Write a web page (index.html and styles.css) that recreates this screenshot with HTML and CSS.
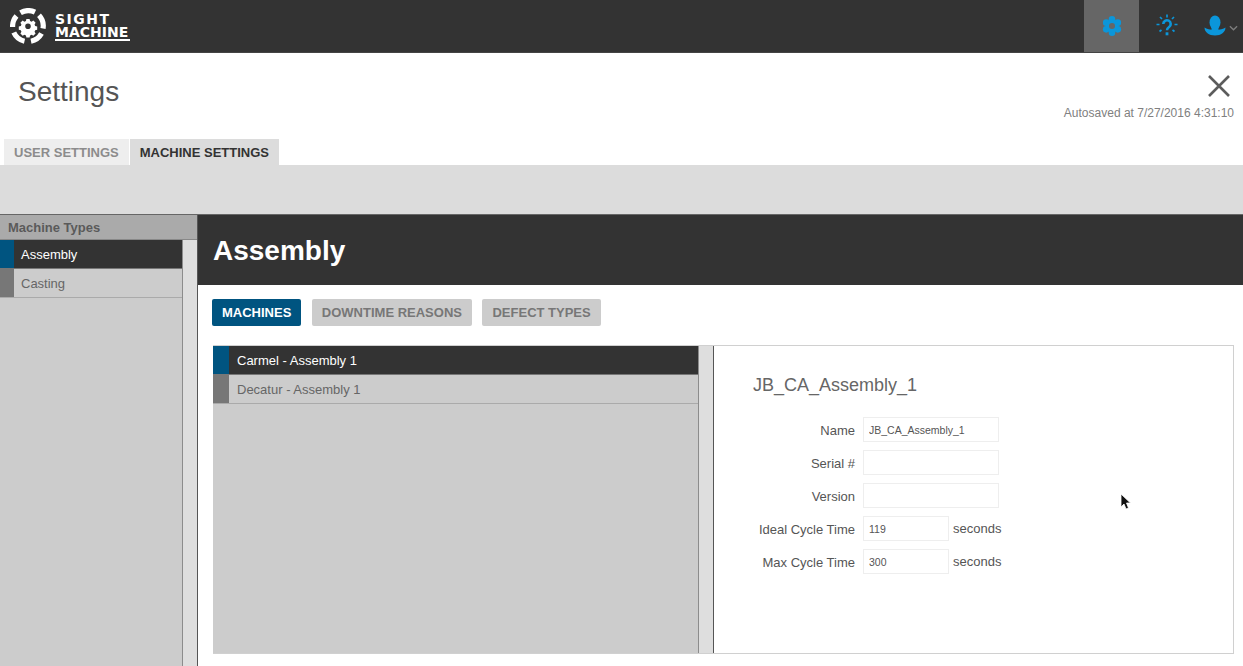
FILE: index.html
```html
<!DOCTYPE html>
<html lang="en">
<head>
  <meta charset="UTF-8" />
  <title>Settings</title>
  <link rel="stylesheet" href="styles.css">
</head>
<body>
  <header class="topbar">
    <a class="brand">
      <svg class="brand-mark" viewBox="0 0 36 36" width="36" height="36">
        <g fill="none" stroke="#fff" stroke-width="5.200">
          <path d="M10.500 4.800A15.500 15.500 0 0 1 25 4.200"/>
          <path d="M29 7.200A15.500 15.500 0 0 1 33 20.500"/>
          <path d="M31.500 25.500A15.500 15.500 0 0 1 21 33.200"/>
          <path d="M14.500 33.200A15.500 15.500 0 0 1 3.800 24.500"/>
          <path d="M2.600 19A15.500 15.500 0 0 1 6.500 8"/>
        </g>
        <path fill="#fff" fill-rule="evenodd" d="M16 9.500h4l.6 2.500 1.900.8 2.200-1.300 2.800 2.800-1.300 2.200.8 1.900 2.500.6v4l-2.500.6-.8 1.900 1.300 2.200-2.800 2.800-2.200-1.300-1.900.8-.6 2.500h-4l-.6-2.500-1.900-.8-2.200 1.300-2.800-2.800 1.300-2.200-.8-1.900-2.500-.6v-4l2.500-.6.8-1.900-1.300-2.200 2.800-2.800 2.200 1.300 1.900-.8zM18 15a3.500 3.500 0 1 0 0 7 3.500 3.500 0 0 0 0-7z" transform="translate(3.600 3.400) scale(.8)"/>
      </svg>
      <span class="brand-name"><span class="brand-top">SIGHT</span><span class="brand-line">MACHINE</span></span>
    </a>
    <nav class="top-icons">
      <a class="top-icon active">
        <svg viewBox="0 0 22 22" width="22" height="22">
          <g fill="#0b96da">
            <circle cx="11" cy="4.300" r="3.300"/>
            <circle cx="11" cy="17.700" r="3.300"/>
            <circle cx="5.200" cy="7.650" r="3.300"/>
            <circle cx="16.800" cy="7.650" r="3.300"/>
            <circle cx="5.200" cy="14.350" r="3.300"/>
            <circle cx="16.800" cy="14.350" r="3.300"/>
            <circle cx="11" cy="11" r="6.500"/>
          </g>
          <circle cx="11" cy="11" r="3" fill="#666"/>
        </svg>
      </a>
      <a class="top-icon">
        <svg viewBox="0 0 22 24" width="22" height="24">
          <g fill="none" stroke="#0b96da">
            <path stroke-width="2.600" d="M7.300 10a3.700 3.700 0 1 1 5.800 3c-1.300.9-2.100 1.500-2.100 3.300"/>
            <path stroke-width="1.700" d="M11 .5v3M4 3l2 2M18 3l-2 2M.5 10.500h3M18.500 10.500h3M3.500 17.500l2-1.500M18.500 17.500l-2-1.500"/>
          </g>
          <rect x="9.600" y="18.300" width="2.800" height="3" fill="#0b96da"/>
        </svg>
      </a>
      <a class="top-icon user">
        <svg viewBox="0 0 22 22" width="22" height="22">
          <ellipse cx="11" cy="7.500" rx="5.500" ry="7" fill="#0b96da"/>
          <path fill="#0b96da" d="M.5 12.500C2.500 14 6 15 11 15s8.500-1 10.500-2.500C21.500 17 17 20.500 11 20.500S.5 17 .5 12.500z"/>
          <path fill="#0b96da" d="M7.500 11h7v4.500h-7z"/>
        </svg>
        <svg class="caret" viewBox="0 0 10 6" width="9" height="6">
          <path d="M1 1l4 4 4-4" fill="none" stroke="#7d7d7d" stroke-width="1.500"/>
        </svg>
      </a>
    </nav>
  </header>

  <section class="page-head">
    <h1>Settings</h1>
    <div class="save-box">
      <svg class="close" viewBox="0 0 24 24" width="24" height="24">
        <path d="M2 2l20 20M22 2L2 22" stroke="#5c5c5c" stroke-width="2.600" fill="none"/>
      </svg>
      <div class="autosaved">Autosaved at 7/27/2016 4:31:10</div>
    </div>
  </section>

  <div class="tabs">
    <a class="tab">USER SETTINGS</a>
    <a class="tab selected">MACHINE SETTINGS</a>
  </div>
  <div class="band"></div>

  <main class="layout">
    <aside class="sidebar">
      <h4>Machine Types</h4>
      <div class="side-body">
        <ul class="list">
          <li class="item on"><i></i><span>Assembly</span></li>
          <li class="item"><i></i><span>Casting</span></li>
        </ul>
        <div class="scroll"></div>
      </div>
    </aside>

    <section class="content">
      <h2>Assembly</h2>
      <div class="pills">
        <a class="pill on">MACHINES</a>
        <a class="pill">DOWNTIME REASONS</a>
        <a class="pill">DEFECT TYPES</a>
      </div>
      <div class="panel">
        <ul class="list machines">
          <li class="item on"><i></i><span>Carmel - Assembly 1</span></li>
          <li class="item"><i></i><span>Decatur - Assembly 1</span></li>
        </ul>
        <div class="scroll"></div>
        <form class="detail">
          <h3>JB_CA_Assembly_1</h3>
          <div class="field"><label>Name</label><input type="text" value="JB_CA_Assembly_1" /></div>
          <div class="field"><label>Serial #</label><input type="text" /></div>
          <div class="field"><label>Version</label><input type="text" /></div>
          <div class="field"><label>Ideal Cycle Time</label><input class="short" type="text" value="119" /><span class="unit">seconds</span></div>
          <div class="field"><label>Max Cycle Time</label><input class="short" type="text" value="300" /><span class="unit">seconds</span></div>
        </form>
      </div>
    </section>
  </main>

  <svg class="cursor" viewBox="0 0 12 18" width="12" height="18">
    <path d="M1 1v13l3-3 2 5 2.500-1-2-5h4z" fill="#111" stroke="#fff" stroke-width=".8"/>
  </svg>
</body>
</html>
```

FILE: styles.css
```css
* {
  box-sizing: border-box;
}
html, body {
  height: 666px;
  overflow: hidden;
}
body {
  margin: 0;
  font-family: "Liberation Sans", Arial, sans-serif;
  background: #fff;
  color: #555;
  position: relative;
}
ul {
  list-style: none;
  margin: 0;
  padding: 0;
}

/* top bar */
.topbar {
  height: 53px;
  background: #333;
  display: flex;
  justify-content: space-between;
  align-items: stretch;
  border-bottom: 1px solid #444;
}
.brand {
  display: flex;
  align-items: center;
  padding-left: 10px;
  gap: 9px;
}
.brand-name {
  display: flex;
  flex-direction: column;
  color: #fff;
  font-family: "DejaVu Sans", sans-serif;
  font-weight: bold;
  font-size: 14px;
  line-height: 13px;
  width: 75px;
  margin-top: 1px;
}
.brand-top {
  letter-spacing: 1.500px;
}
.brand-line {
  border-bottom: 2px solid #fff;
  padding-bottom: 1px;
  line-height: 12px;
}
.top-icons {
  display: flex;
}
.top-icon {
  width: 55px;
  display: flex;
  align-items: center;
  justify-content: center;
}
.top-icon.active {
  background: #666;
}
.top-icon.user {
  width: 49px;
  justify-content: flex-start;
  padding-left: 10px;
  gap: 3px;
}
.caret {
  margin-top: 3px;
}

/* page head */
.page-head {
  height: 86px;
  display: flex;
  justify-content: space-between;
  padding: 0 9px 0 18px;
}
.page-head h1 {
  margin: 21px 0 0;
  font-weight: normal;
  font-size: 28px;
  line-height: 36px;
  color: #555;
}
.save-box {
  display: flex;
  flex-direction: column;
  align-items: flex-end;
  padding-top: 21px;
}
.close {
  margin-right: 3px;
}
.autosaved {
  margin-top: 8px;
  font-size: 12px;
  line-height: 14px;
  color: #808080;
}

/* tabs */
.tabs {
  display: flex;
  height: 26px;
  padding-left: 4px;
  gap: 1px;
}
.tab {
  font-size: 13px;
  font-weight: bold;
  line-height: 27px;
  padding: 0 10px;
  background: #eee;
  color: #8c8c8c;
}
.tab.selected {
  background: #dcdcdc;
  color: #333;
}
.band {
  height: 49px;
  background: #dcdcdc;
}

/* main area */
.layout {
  display: flex;
  height: 452px;
  border-top: 1px solid #666;
}
.sidebar {
  width: 198px;
  flex: none;
  display: flex;
  flex-direction: column;
  border-right: 1px solid #555;
}
.sidebar h4 {
  margin: 0;
  height: 25px;
  background: #aaa;
  border-bottom: 1px solid #888;
  color: #5a5a5a;
  font-size: 13px;
  line-height: 25px;
  padding-left: 8px;
}
.side-body {
  flex: 1;
  display: flex;
}
.list {
  flex: 1;
  background: #ccc;
  border-right: 1px solid #8c8c8c;
}
.scroll {
  width: 14px;
  flex: none;
  background: #dedede;
}
.item {
  height: 29px;
  display: flex;
  font-size: 13px;
  line-height: 30px;
  color: #666;
  border-bottom: 1px solid #aaa;
}
.item i {
  width: 14px;
  flex: none;
  background: #777;
}
.item span {
  padding-left: 7px;
}
.item.on {
  background: #333;
  color: #fff;
  border-bottom-color: #777;
}
.item.on i {
  background: #005480;
}

/* assembly content */
.content {
  flex: 1;
  min-width: 0;
}
.content h2 {
  margin: 0;
  height: 70px;
  background: #333;
  color: #fff;
  font-size: 28px;
  line-height: 71px;
  padding-left: 15px;
}
.pills {
  display: flex;
  gap: 10.500px;
  padding: 14px 0 0 14px;
}
.pill {
  height: 27px;
  padding: 0 10px;
  border-radius: 2px;
  background: #ccc;
  color: #777;
  font-size: 13px;
  font-weight: bold;
  line-height: 27px;
}
.pill.on {
  background: #005480;
  color: #fff;
}
.panel {
  display: flex;
  height: 309px;
  margin: 19px 9px 0 15px;
  border: 1px solid #d0d0d0;
  border-left: 0;
}
.machines {
  flex: none;
  width: 486px;
}
.machines .item i {
  width: 16px;
}
.machines .item span {
  padding-left: 8px;
}
.panel .scroll {
  border-right: 1px solid #555;
  width: 15px;
}

/* detail form */
.detail {
  flex: 1;
  padding: 26px 0 0 39px;
}
.detail h3 {
  margin: 0 0 19px;
  font-weight: normal;
  font-size: 18px;
  line-height: 26px;
  color: #666;
}
.field {
  display: flex;
  align-items: center;
  height: 25px;
  margin-bottom: 8px;
  font-size: 13px;
  color: #555;
}
.field label {
  width: 102px;
  flex: none;
  text-align: right;
  margin: 1px 8px 0 0;
}
.field input {
  width: 136px;
  height: 25px;
  padding: 0 5px;
  border: 1px solid #eee;
  font-family: inherit;
  font-size: 10.500px;
  color: #555;
  background: #fff;
}
.field input.short {
  width: 86px;
}
.unit {
  margin: -1px 0 0 4px;
  font-size: 13px;
}

/* mouse pointer captured in the shot */
.cursor {
  position: absolute;
  left: 1120px;
  top: 493px;
}
```
